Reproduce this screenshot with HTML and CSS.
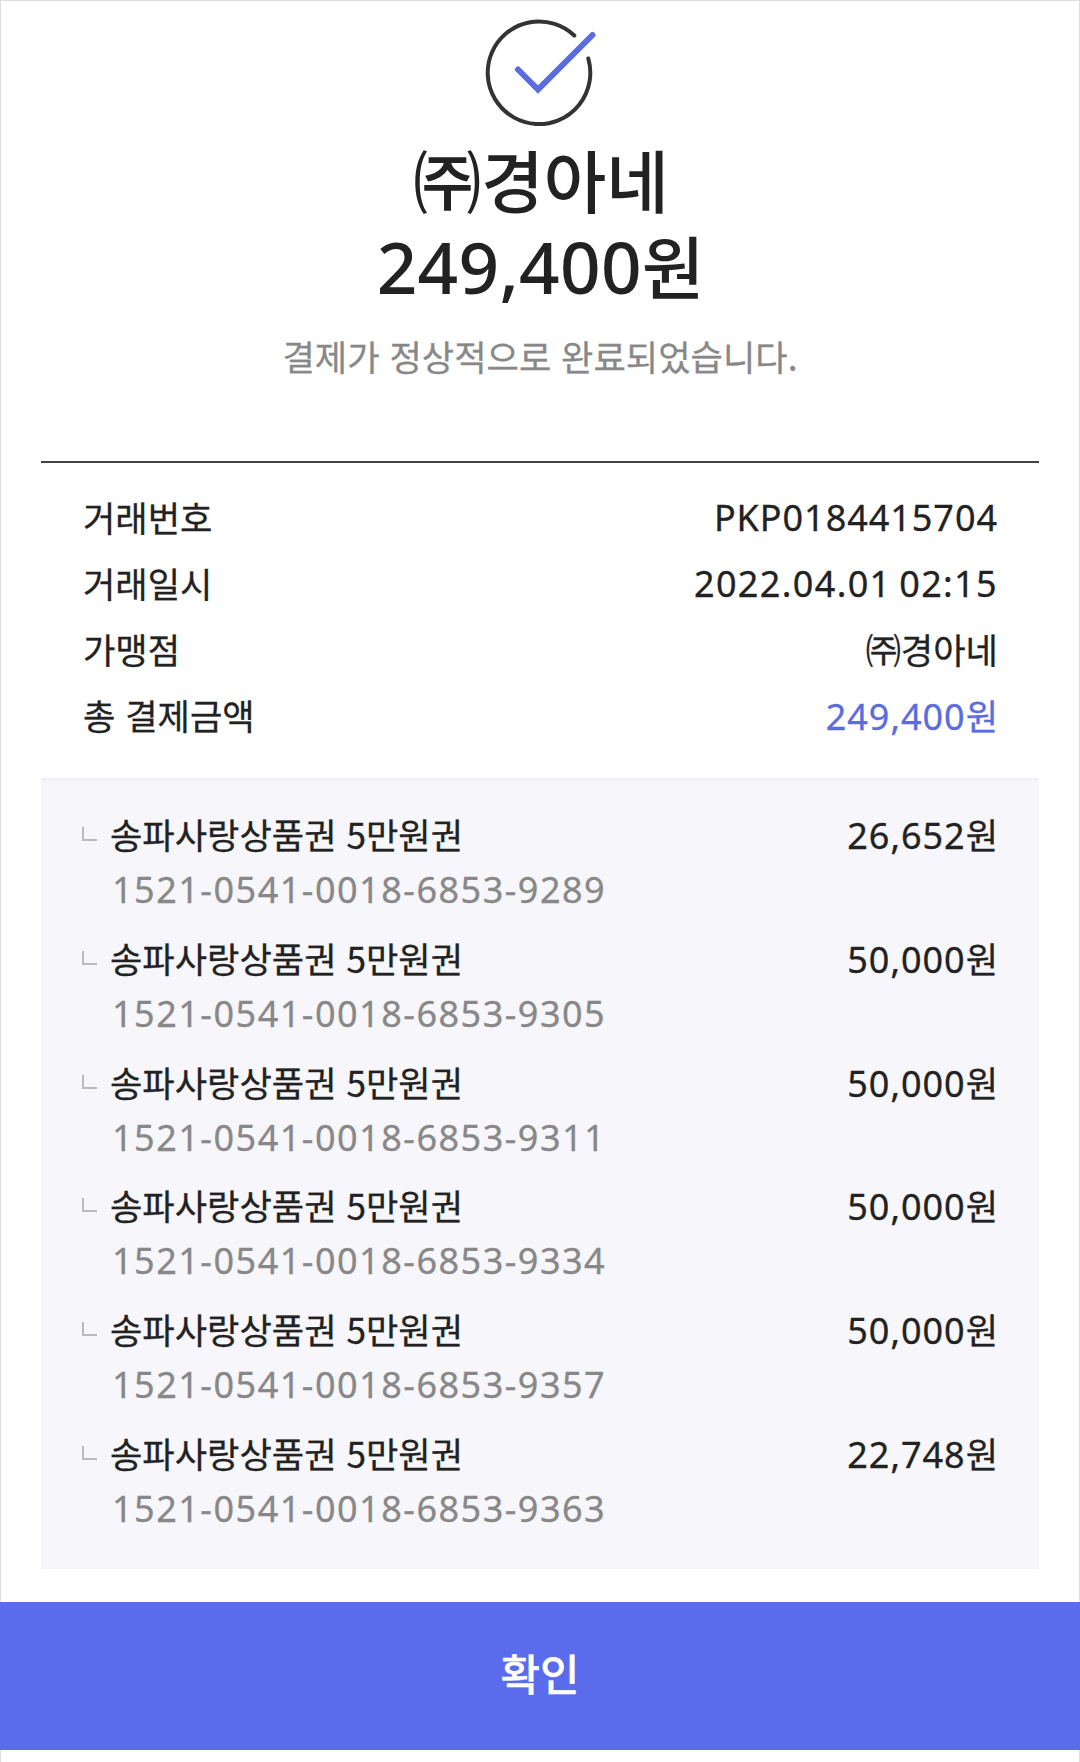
FILE: index.html
```html
<!DOCTYPE html>
<html lang="ko">
<head>
  <meta charset="UTF-8">
  <meta name="viewport" content="width=device-width, initial-scale=1.0">
  <title>결제 완료</title>
  <link rel="stylesheet" href="styles.css">
</head>
<body>
  <div class="page">
    <header class="result">
      <svg class="check-icon" viewBox="0 0 116 112" fill="none">
        <path d="M92.3 16.5 A51.3 51.3 0 1 0 106.3 39.5" stroke="#333" stroke-width="4" stroke-linecap="round"/>
        <path d="M36 50.5 L56 70.5 L110.5 16" stroke="#5b6be0" stroke-width="6" stroke-linecap="round"/>
      </svg>
      <h1 class="store">㈜경아네</h1>
      <p class="total"><span class="num">249,400</span>원</p>
      <p class="message">결제가 정상적으로 완료되었습니다.</p>
    </header>

    <section class="receipt">
      <dl class="summary">
        <div class="row"><dt>거래번호</dt><dd class="num code">PKP0184415704</dd></div>
        <div class="row"><dt>거래일시</dt><dd class="num code date">2022.04.01 02:15</dd></div>
        <div class="row"><dt>가맹점</dt><dd>㈜경아네</dd></div>
        <div class="row"><dt>총 결제금액</dt><dd class="accent"><span class="num">249,400</span>원</dd></div>
      </dl>
      <ul class="vouchers">
        <li>
          <div class="row"><span class="name">송파사랑상품권 5만원권</span><span><span class="num">26,652</span>원</span></div>
          <p class="serial">1521-0541-0018-6853-9289</p>
        </li>
        <li>
          <div class="row"><span class="name">송파사랑상품권 5만원권</span><span><span class="num">50,000</span>원</span></div>
          <p class="serial">1521-0541-0018-6853-9305</p>
        </li>
        <li>
          <div class="row"><span class="name">송파사랑상품권 5만원권</span><span><span class="num">50,000</span>원</span></div>
          <p class="serial">1521-0541-0018-6853-9311</p>
        </li>
        <li>
          <div class="row"><span class="name">송파사랑상품권 5만원권</span><span><span class="num">50,000</span>원</span></div>
          <p class="serial">1521-0541-0018-6853-9334</p>
        </li>
        <li>
          <div class="row"><span class="name">송파사랑상품권 5만원권</span><span><span class="num">50,000</span>원</span></div>
          <p class="serial">1521-0541-0018-6853-9357</p>
        </li>
        <li>
          <div class="row"><span class="name">송파사랑상품권 5만원권</span><span><span class="num">22,748</span>원</span></div>
          <p class="serial">1521-0541-0018-6853-9363</p>
        </li>
      </ul>
    </section>

    <button class="confirm">확인</button>
  </div>
</body>
</html>
```

FILE: styles.css
```css
* {
  box-sizing: border-box;
  margin: 0;
  padding: 0;
}
body {
  background-color: #fff;
  color: #222;
  font-family: "Noto Sans CJK KR", sans-serif;
  font-size: 35.2px;
  -webkit-text-stroke: 0.3px currentColor;
}
.page {
  height: 1762px;
  border: 1px solid #ddd;
  border-bottom: 0;
  display: flex;
  flex-direction: column;
}
.num, .serial {
  font-family: "Noto Sans", "Noto Sans CJK KR", sans-serif;
  font-size: 36px;
  letter-spacing: 0.95px;
}
.code {
  line-height: 68px;
  height: 66px;
}
.date {
  letter-spacing: 1.35px;
  word-spacing: -3px;
}
.result {
  height: 460px;
  padding-top: 18px;
  display: flex;
  flex-direction: column;
  align-items: center;
}
.check-icon {
  width: 116px;
  height: 112px;
}
.store, .total {
  font-size: 68px;
  font-weight: 500;
  line-height: 85px;
  -webkit-text-stroke: 0;
}
.store {
  margin-top: 5px;
  padding-left: 2px;
}
.total {
  margin-top: 1px;
  padding-left: 1px;
}
.total .num {
  font-size: 71px;
  letter-spacing: 0.3px;
}
.message {
  margin-top: 20px;
  color: #888;
  line-height: 54px;
}
.receipt {
  margin: 0 40px;
  border-top: 2px solid #444;
}
.summary {
  height: 315px;
  padding: 21px 41px 0 42px;
}
.row {
  display: flex;
  justify-content: space-between;
  line-height: 66px;
}
.accent {
  color: #5b6cdf;
}
.vouchers {
  height: 791px;
  padding: 26px 41px 0;
  background-color: #f6f6fb;
  border-top: 2px solid #f0f0f2;
  list-style: none;
}
.vouchers li {
  height: 123.8px;
}
.vouchers .row {
  line-height: 56px;
}
.name::before {
  content: "";
  display: inline-block;
  width: 13px;
  height: 12px;
  margin-right: 13px;
  border-left: 2px solid #bbb;
  border-bottom: 2px solid #bbb;
  vertical-align: 8px;
}
.serial {
  padding-left: 30px;
  color: #888;
  letter-spacing: 1.5px;
  line-height: 52px;
}
.confirm {
  height: 148px;
  margin: 33px -1px 0;
  padding-bottom: 9px;
  border: 0;
  background-color: #5a6bec;
  color: #fff;
  font-family: inherit;
  font-size: 43px;
  font-weight: 500;
}
```
